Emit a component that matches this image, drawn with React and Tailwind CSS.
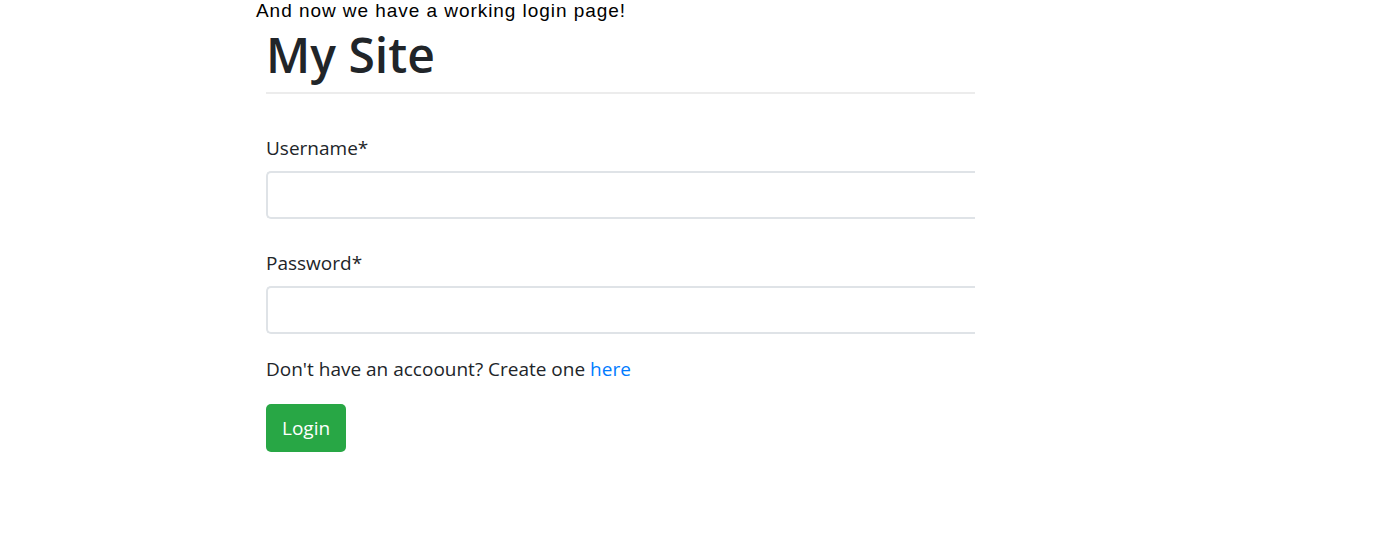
function Field({ id, label, type, autoComplete }) {
  return (
    <div>
      <label htmlFor={id} className="mb-2 block text-[19px] leading-[30px]">
        {label}
      </label>
      <input
        id={id}
        name={id}
        type={type}
        autoComplete={autoComplete}
        required
        className="block h-12 w-full rounded-l-[5px] border-2 border-r-0 border-[#dfe3e7] bg-white px-4 text-[19px] outline-none"
      />
    </div>
  );
}

export default function App() {
  return (
    <main className="bg-white pl-64 pr-4">
      <p className="font-['Liberation_Sans',Arial,sans-serif] text-[19px] leading-[22px] tracking-wider text-black">
        And now we have a working login page!
      </p>
      <section className="ml-[10px] max-w-[709px] font-['Open_Sans','Noto_Sans',sans-serif] text-[#212529]">
        <h1 className="border-b-2 border-[#ececec] pb-1 text-[48px] font-semibold leading-[66px]">
          My Site
        </h1>
        <form className="pt-[39px]" onSubmit={(event) => event.preventDefault()}>
          <div className="flex flex-col gap-[29px]">
            <Field id="username" label="Username*" type="text" autoComplete="username" />
            <Field id="password" label="Password*" type="password" autoComplete="current-password" />
          </div>
          <p className="my-5 text-[19px] leading-[30px]">
            Don't have an accoount? Create one{" "}
            <a href="#register" className="text-[#007bff]">here</a>
          </p>
          <button
            type="submit"
            className="h-12 rounded-[5px] bg-[#28a745] px-4 text-[19px] leading-[30px] text-white"
          >
            Login
          </button>
        </form>
      </section>
    </main>
  );
}
